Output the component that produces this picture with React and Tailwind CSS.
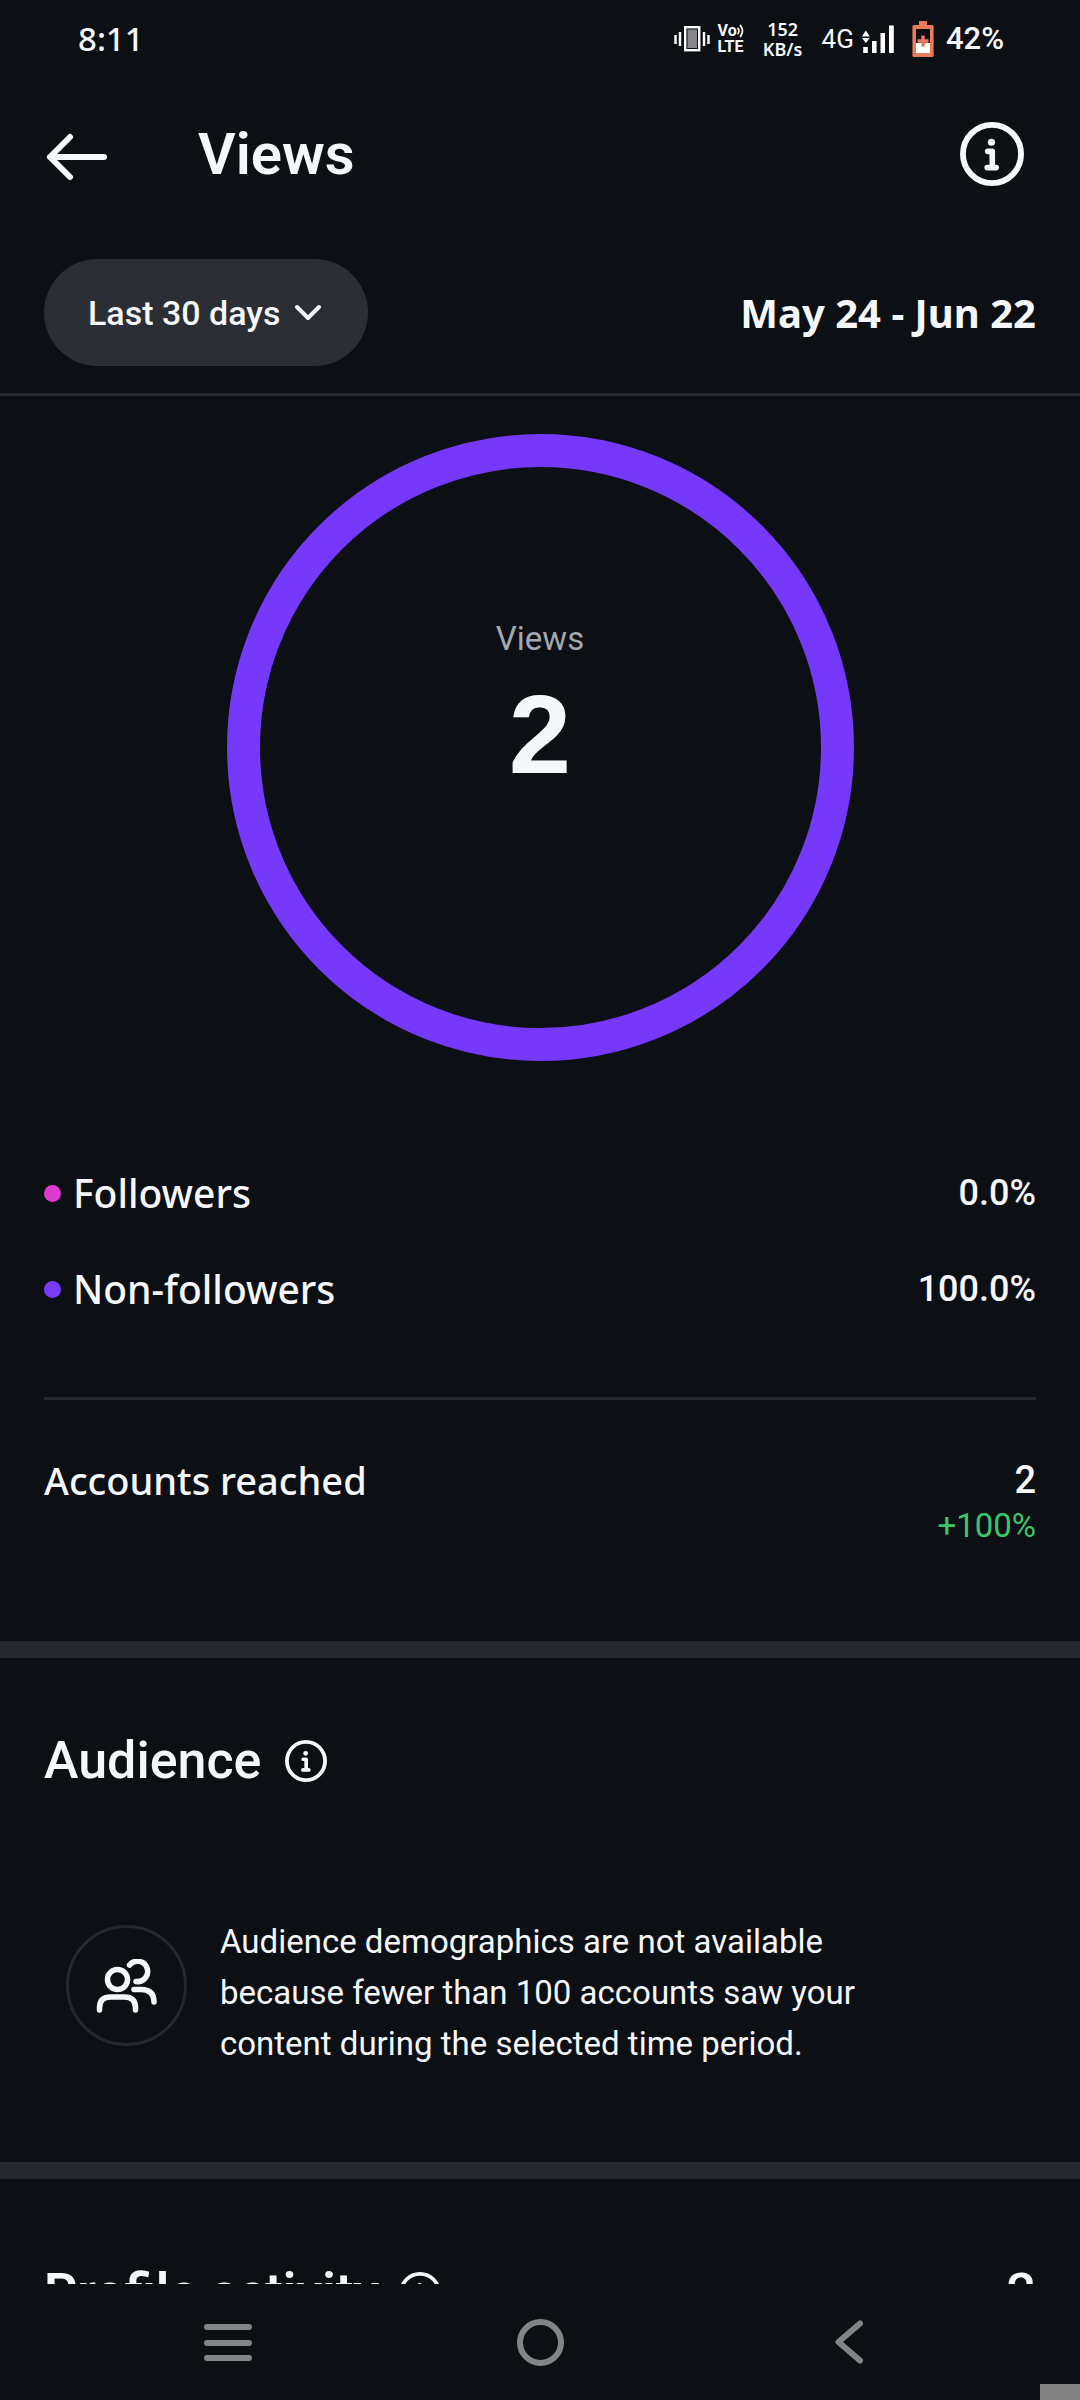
import React from 'react';

function InfoIcon({ className, ring = 2.2 }) {
  return (
    <svg viewBox="0 0 24 24" fill="none" stroke="currentColor" strokeLinecap="round" strokeLinejoin="round" className={className} aria-hidden="true">
      <circle cx="12" cy="12" r="10.9" strokeWidth={ring} />
      <circle cx="11.8" cy="7.6" r="1.35" fill="currentColor" stroke="none" />
      <path d="M10.4 11h1.7v6M10.2 17.1h3.4" strokeWidth="2.1" />
    </svg>
  );
}

function VibrateIcon() {
  return (
    <svg viewBox="0 0 36 26" className="h-[26px] w-9" aria-hidden="true">
      <path d="M1.5 9v9M6 6v14M30 6v14M34.5 9v9" stroke="#fff" strokeWidth="2.4" />
      <rect x="11.2" y="1.2" width="14" height="23" fill="#0c0f14" stroke="#fff" strokeWidth="2.4" />
      <rect x="13.5" y="3.5" width="9.5" height="18.5" fill="#85878a" />
    </svg>
  );
}

function SignalIcon() {
  return (
    <svg viewBox="0 0 32 28" className="h-7 w-8" fill="#fff" aria-hidden="true">
      <path d="M3.8 5.5l4 6H0zM3.8 18l4-5H0z" />
      <path d="M1.2 22h4.6v6H1.2zM10 16h4.6v12H10zM18.5 8H23v20h-4.5zM27 .5h4.8V28H27z" />
    </svg>
  );
}

function BatteryIcon() {
  return (
    <svg viewBox="0 0 22 36" className="h-9 w-[22px]" aria-hidden="true">
      <path d="M7 0h8v4h5a1.6 1.6 0 0 1 1.6 1.6v28.8A1.6 1.6 0 0 1 20 36H2a1.6 1.6 0 0 1-1.6-1.6V5.600A1.6 1.6 0 0 1 2 4h5z" fill="#e87b5a" />
      <path d="M4 8h14v14H4z" fill="#0c0f14" />
      <path d="M4 22h14v10H4z" fill="#fff" />
      <path d="M9.300 14.500h3.400v3.800h3.800v3.400h-3.800v3.800H9.300v-3.800H5.500v-3.400h3.800z" fill="#e87b5a" />
    </svg>
  );
}

function VolteIcon() {
  return (
    <span className="flex w-7 flex-col text-[16px] leading-4 font-bold">
      <span className="flex items-center font-['Roboto',sans-serif]">
        Vo
        <svg viewBox="0 0 8 14" className="h-3.5 w-2" fill="none" stroke="#fff" strokeWidth="1.7" strokeLinecap="round" aria-hidden="true">
          <path d="M1 4.500q2 2.500 0 5M3.500 1.500q4 5 0 11" />
        </svg>
      </span>
      <span className="font-['Roboto',sans-serif]">LTE</span>
    </span>
  );
}

function StatusBar() {
  return (
    <div className="flex h-[78px] items-center justify-between pr-[76px] pl-[78px] font-['Noto_Sans',sans-serif]">
      <span className="text-[33px] leading-10 font-medium">8:11</span>
      <div className="flex items-center">
        <VibrateIcon />
        <div className="ml-2"><VolteIcon /></div>
        <div className="ml-3.5 flex w-[46px] flex-col items-center text-[18px] leading-5 font-semibold">
          <span>152</span>
          <span>KB/s</span>
        </div>
        <span className="ml-4 font-['Roboto',sans-serif] text-[26px] leading-8">4G</span>
        <div className="ml-2"><SignalIcon /></div>
        <div className="ml-[18px]"><BatteryIcon /></div>
        <span className="ml-3 font-['Roboto',sans-serif] text-[31px] leading-10 font-medium">42%</span>
      </div>
    </div>
  );
}

function LegendRow({ dot, label, value }) {
  return (
    <div className="flex h-24 items-center justify-between text-[#f5f7fa]">
      <dt className="flex items-center gap-3 font-['Noto_Sans',sans-serif] text-[39px] leading-[44px] font-medium">
        <span className={`size-[17px] rounded-full ${dot}`} />
        {label}
      </dt>
      <dd className="text-[36px] leading-[44px] font-medium">{value}</dd>
    </div>
  );
}

export default function App() {
  return (
    <div className="flex h-screen flex-col bg-[#0c0f14] font-['Roboto',sans-serif] text-[#f5f7fa]">
      <StatusBar />

      <header className="flex h-[152px] shrink-0 items-center justify-between pr-14 pl-[46px]">
        <div className="flex items-center gap-[90px]">
          <button type="button" aria-label="Back" className="pt-1.5">
            <svg viewBox="0 0 62 48" className="h-12 w-[62px]" fill="none" stroke="currentColor" strokeWidth="6" strokeLinecap="round" strokeLinejoin="round" aria-hidden="true">
              <path d="M24 4L4 24l20 20M4 24h54" />
            </svg>
          </button>
          <h1 className="text-[58px] leading-[64px] font-semibold">Views</h1>
        </div>
        <button type="button" aria-label="About views">
          <InfoIcon className="size-16 overflow-visible" />
        </button>
      </header>

      <div className="flex shrink-0 items-start justify-between border-b-3 border-[#25282d] px-11 pt-[29px] pb-[27px]">
        <button type="button" className="flex h-[107px] items-center gap-3.5 rounded-full bg-[#2b2e35] pr-[46px] pl-11 text-[34px] leading-10 font-medium">
          Last 30 days
          <svg viewBox="0 0 28 18" className="h-[18px] w-7" fill="none" stroke="currentColor" strokeWidth="4" strokeLinecap="round" strokeLinejoin="round" aria-hidden="true">
            <path d="M3 3l11 11L25 3" />
          </svg>
        </button>
        <span className="self-center font-['Noto_Sans',sans-serif] text-[40px] leading-[48px] font-bold">May 24 - Jun 22</span>
      </div>

      <main className="min-h-0 flex-1 overflow-hidden">
        <section className="px-11">
          <div className="mx-auto mt-[38px] flex size-[627px] flex-col items-center rounded-full border-[33px] border-[#7638fa] pt-[152px]">
            <span className="text-[33px] leading-10 text-[#a2a7b1]">Views</span>
            <span className="mt-3.5 font-['Liberation_Sans',sans-serif] text-[112px] leading-[124px] font-bold">2</span>
          </div>

          <dl className="mt-[84px]">
            <LegendRow dot="bg-[#dd3bcf]" label="Followers" value="0.0%" />
            <LegendRow dot="bg-[#7a3af9]" label="Non-followers" value="100.0%" />
          </dl>

          <div className="mt-[60px] flex h-[244px] items-start justify-between border-t-3 border-[#25282d] pt-[58px]">
            <span className="font-['Noto_Sans',sans-serif] text-[38px] leading-[44px] font-medium">Accounts reached</span>
            <div className="flex flex-col items-end">
              <span className="text-[38px] leading-[44px] font-medium">2</span>
              <span className="text-[33px] leading-[48px] text-[#3cc46c]">+100%</span>
            </div>
          </div>
        </section>

        <section className="border-t-17 border-[#25282d] px-11">
          <div className="flex items-center gap-6 pt-[71px]">
            <h2 className="text-[52px] leading-[64px] font-medium">Audience</h2>
            <button type="button" aria-label="About audience">
              <InfoIcon className="size-[42px] overflow-visible" />
            </button>
          </div>
          <div className="mt-[123px] flex h-[246px] items-start gap-[33px] pl-[22px]">
            <span className="mt-[9px] flex size-[121px] items-center justify-center rounded-full border-3 border-[#25282d]">
              <svg viewBox="0 0 62 54" className="h-[54px] w-[62px]" fill="none" stroke="currentColor" strokeWidth="5.500" strokeLinecap="round" aria-hidden="true">
                <circle cx="21.500" cy="20.500" r="10" />
                <path d="M3.500 51v-2q0-11 11-11h14q11 0 11 11v2" />
                <path d="M33.500 6a10.200 10.200 0 1 1 6.500 16.500M38 30.500h7q13 0 13 12.500" />
              </svg>
            </span>
            <p className="w-[660px] text-[33px] leading-[51px]">
              Audience demographics are not available because fewer than 100 accounts saw your content during the selected time period.
            </p>
          </div>
        </section>

        <section className="border-t-17 border-[#25282d] px-11">
          <div className="flex items-center justify-between pt-[82px]">
            <div className="flex items-center gap-5">
              <h2 className="text-[52px] leading-[64px] font-semibold">Profile activity</h2>
              <button type="button" aria-label="About profile activity">
                <InfoIcon className="size-[42px] overflow-visible" />
              </button>
            </div>
            <span className="text-[52px] leading-[64px] font-medium">2</span>
          </div>
        </section>
      </main>

      <nav className="relative grid h-[116px] shrink-0 grid-cols-3 items-center justify-items-center px-[72px] text-[#828486]">
        <button type="button" aria-label="Recent apps">
          <svg viewBox="0 0 48 38" className="h-[38px] w-12 overflow-visible" stroke="currentColor" strokeWidth="6" strokeLinecap="round" aria-hidden="true">
            <path d="M3 4h42M3 20h42M3 35h42" />
          </svg>
        </button>
        <button type="button" aria-label="Home" className="size-[47px] rounded-full border-6 border-current" />
        <button type="button" aria-label="Go back" className="pr-1.5">
          <svg viewBox="0 0 28 44" className="h-11 w-7" fill="none" stroke="currentColor" strokeWidth="6" strokeLinecap="round" strokeLinejoin="round" aria-hidden="true">
            <path d="M25 3.500L3.500 22 25 40.500" />
          </svg>
        </button>
        <span className="absolute right-0 bottom-0 h-4 w-10 bg-[#818181]" />
      </nav>
    </div>
  );
}
